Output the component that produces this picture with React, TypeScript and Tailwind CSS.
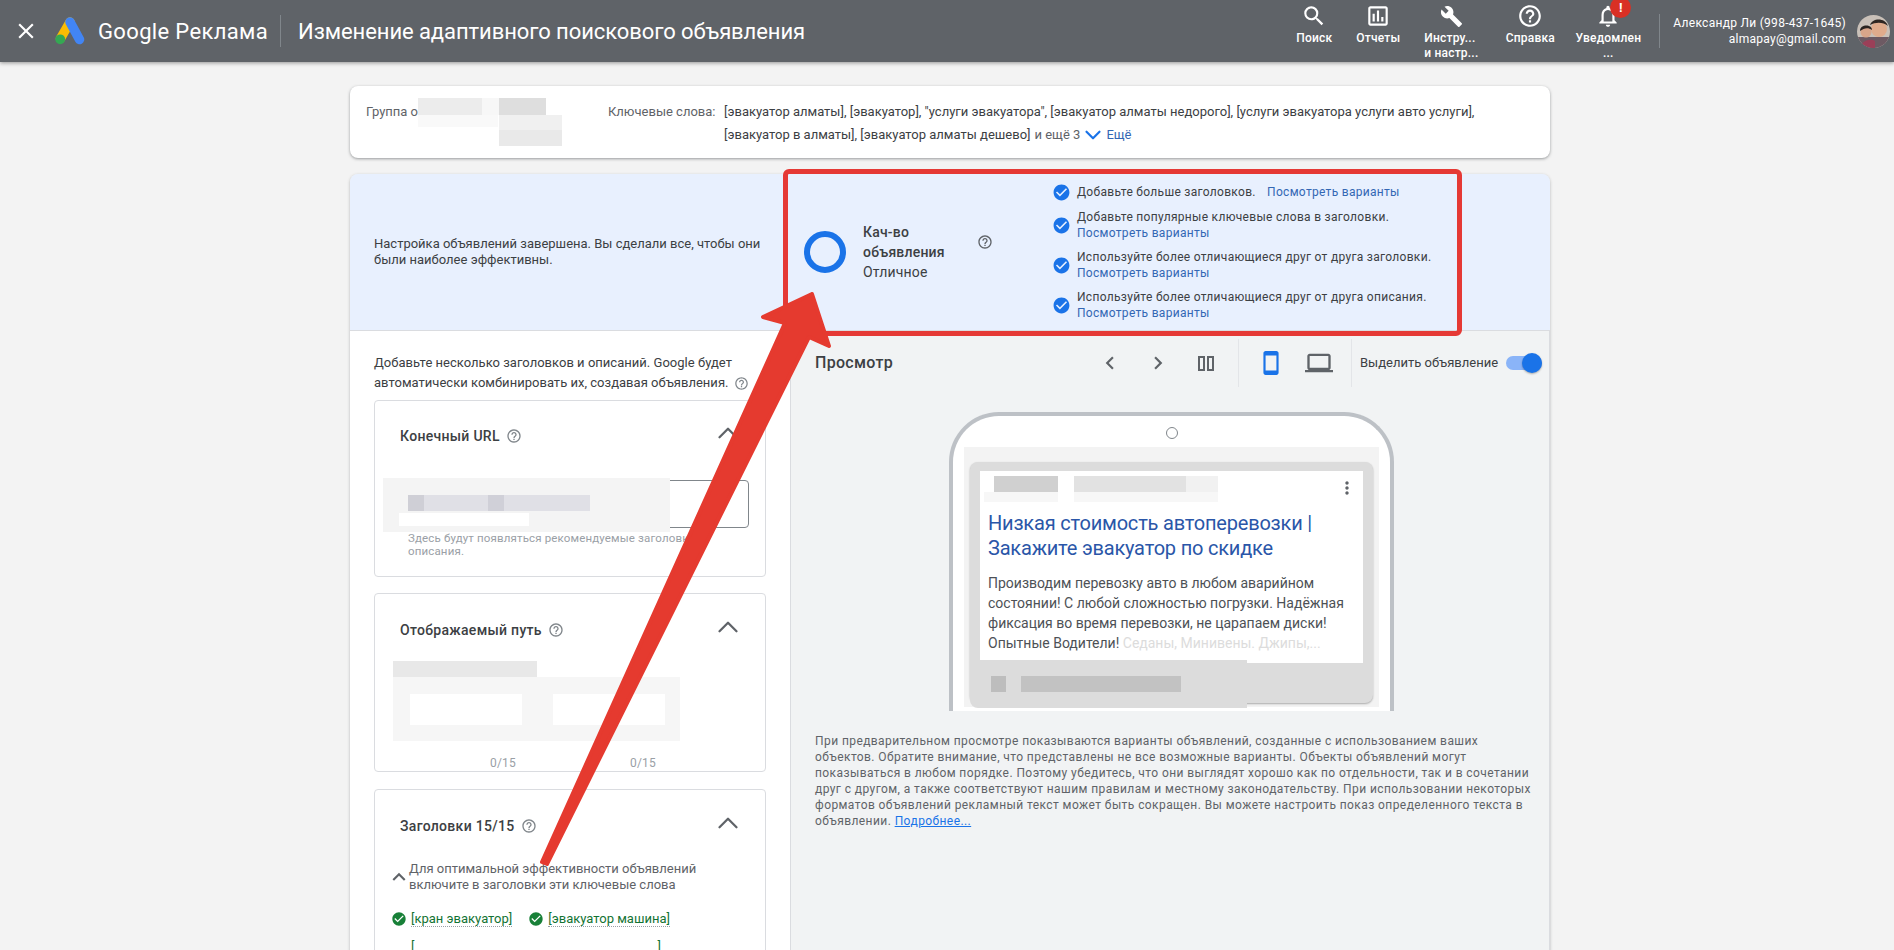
import type { ReactNode } from 'react'
import { ChevronUp, ChevronDown } from 'lucide-react'
import {
  MdClose,
  MdSearch,
  MdOutlineAssessment,
  MdBuild,
  MdHelpOutline,
  MdOutlineNotifications,
  MdCheckCircle,
  MdKeyboardArrowUp,
  MdChevronLeft,
  MdChevronRight,
  MdSmartphone,
  MdLaptop,
  MdMoreVert,
} from 'react-icons/md'

function AdsLogo() {
  return (
    <svg width="30" height="28" viewBox="0 0 30 28" className="shrink-0">
      <path d="M15 5 L5.5 21.5" stroke="#fbbc04" strokeWidth="9.5" strokeLinecap="round" />
      <path d="M15 5 L24.5 22.5" stroke="#4285f4" strokeWidth="9.5" strokeLinecap="round" />
      <circle cx="5.2" cy="22.3" r="4.9" fill="#34a853" />
    </svg>
  )
}

function Avatar() {
  return (
    <svg width="33" height="33" viewBox="0 0 33 33" className="shrink-0 rounded-full">
      <rect width="33" height="33" fill="#c9c0b8" />
      <rect y="22" width="33" height="11" fill="#6d5a63" />
      <circle cx="22" cy="14" r="8" fill="#e0ab8c" />
      <path d="M13 10 C15 3 28 2 31 11 C26 7 19 7 13 10 Z" fill="#2f2622" />
      <circle cx="9" cy="17" r="5.5" fill="#d9a58a" />
      <path d="M3 16 C3 9 15 9 15 15 C11 12 7 13 3 16 Z" fill="#2a2320" />
      <path d="M4 33 C4 25 14 23 18 26 L18 33 Z" fill="#9b3f58" />
    </svg>
  )
}

function NavItem({ icon, label, second, width }: { icon: ReactNode; label: string; second?: string; width: string }) {
  return (
    <div className={`flex h-[62px] flex-col items-center pt-[3px] ${width}`}>
      <div className="flex h-[26px] items-center justify-center text-[26px] text-white">{icon}</div>
      <div className="mt-[2px] text-[12px] leading-[15px] font-medium tracking-[0.2px] whitespace-nowrap text-white">
        <div>{label}</div>
        {second && <div className="text-center">{second}</div>}
      </div>
    </div>
  )
}

function Suggestion({ text }: { text: string }) {
  return (
    <div className="flex h-[40px] items-center">
      <MdCheckCircle className="mr-[6px] ml-[-1px] shrink-0 text-[19px] text-[#1a73e8]" />
      <div className="leading-[16px] whitespace-nowrap">
        <div>{text}</div>
        <a className="text-[#3367b4]">Посмотреть варианты</a>
      </div>
    </div>
  )
}

function CardHead({ title }: { title: string }) {
  return (
    <div className="flex h-[24px] items-center justify-between pr-[20px] pl-[25px]">
      <div className="flex items-center text-[14px] font-medium tracking-[0.3px] text-[#3c4043]">
        {title}
        <MdHelpOutline className="ml-[6px] text-[16px] text-[#80868b]" />
      </div>
      <ChevronUp size={34} strokeWidth={1.6} className="mt-[-6px] text-[#5f6368]" />
    </div>
  )
}

function Keyword({ text }: { text: string }) {
  return (
    <div className="flex items-center">
      <MdCheckCircle className="mr-[4px] text-[16px] text-[#188038]" />
      <span className="border-b border-dotted border-[#9aa0a6] leading-[15px] text-[#137333]">{text}</span>
    </div>
  )
}

export default function App() {
  return (
    <div className="relative h-[950px] w-[1894px] overflow-hidden bg-[#f3f3f3] [font-family:Roboto,sans-serif] text-[#3c4043]">
      <header className="relative z-10 flex h-[62px] items-center bg-[#5f6368] text-white shadow-[0_1px_4px_rgba(0,0,0,0.4)]">
        <MdClose className="ml-[13px] text-[26px]" />
        <div className="ml-[16px]">
          <AdsLogo />
        </div>
        <div className="ml-[13px] text-[22px] tracking-[0.35px] whitespace-nowrap">Google Реклама</div>
        <div className="ml-[12px] h-[32px] w-px bg-[#80868b]" />
        <div className="ml-[17px] text-[22px] tracking-[-0.08px] whitespace-nowrap">Изменение адаптивного поискового объявления</div>
        <div className="ml-auto flex items-start">
          <NavItem width="w-[64px]" icon={<MdSearch />} label="Поиск" />
          <NavItem width="w-[64px]" icon={<MdOutlineAssessment />} label="Отчеты" />
          <NavItem width="w-[82px]" icon={<MdBuild className="text-[23px]" />} label="Инстру..." second="и настр..." />
          <NavItem width="w-[76px]" icon={<MdHelpOutline />} label="Справка" />
          <div className="relative w-[80px]">
            <NavItem width="w-[80px]" icon={<MdOutlineNotifications />} label="Уведомлен" second="..." />
            <div className="absolute top-[-3px] left-[42px] flex h-[21px] w-[21px] items-center justify-center rounded-full bg-[#d93025] text-[13px] font-bold">!</div>
          </div>
        </div>
        <div className="ml-[11px] h-[34px] w-px bg-[#80868b]" />
        <div className="ml-[13px] text-right text-[12px] leading-[16px] tracking-[0.28px] whitespace-nowrap">
          <div>Александр Ли (998-437-1645)</div>
          <div>almapay@gmail.com</div>
        </div>
        <div className="mr-[4px] ml-[11px]">
          <Avatar />
        </div>
      </header>

      <main className="ml-[350px] w-[1200px] pt-[24px]">
        <section className="relative flex h-[72px] rounded-lg bg-white pt-[16px] text-[13px] leading-[20px] shadow-[0_1px_3px_rgba(60,64,67,0.5)]">
          <div className="ml-[16px] w-[242px] text-[#5f6368]">Группа о</div>
          <div className="w-[116px] text-[#5f6368]">Ключевые слова:</div>
          <div className="w-[770px]">
            <div className="whitespace-nowrap">[эвакуатор алматы], [эвакуатор], "услуги эвакуатора", [эвакуатор алматы недорого], [услуги эвакуатора услуги авто услуги],</div>
            <div className="flex items-center whitespace-nowrap">
              [эвакуатор в алматы], [эвакуатор алматы дешево]
              <span className="ml-[4px] text-[#5f6368]">и ещё 3</span>
              <ChevronDown size={26} strokeWidth={2} className="text-[#1a73e8]" />
              <span className="text-[#3367b4]">Ещё</span>
            </div>
          </div>
          <div className="absolute top-[12px] left-[68px] h-[17px] w-[64px] bg-[#ececec]" />
          <div className="absolute top-[12px] left-[132px] h-[17px] w-[17px] bg-[#f7f7f7]" />
          <div className="absolute top-[12px] left-[149px] h-[17px] w-[47px] bg-[#dedede]" />
          <div className="absolute top-[29px] left-[68px] h-[12px] w-[80px] bg-[#f9f9f9]" />
          <div className="absolute top-[29px] left-[149px] h-[15px] w-[63px] bg-[#f0f0f0]" />
          <div className="absolute top-[44px] left-[149px] h-[16px] w-[63px] bg-[#e9e9e9]" />
        </section>

        <section className="relative mt-[16px] rounded-t-lg shadow-[0_1px_3px_rgba(60,64,67,0.35)]">
          <div className="flex h-[157px] items-center rounded-t-lg border-b border-[#dadce0] bg-[#e8f0fe]">
            <div className="ml-[24px] w-[409px] text-[13px] leading-[16px]">
              Настройка объявлений завершена. Вы сделали все, чтобы они были наиболее эффективны.
            </div>
            <div className="ml-[21px] h-[42px] w-[42px] rounded-full border-[6px] border-[#1a73e8]" />
            <div className="ml-[17px] w-[100px] text-[14px] leading-[20px] tracking-[0.2px]">
              <div className="font-medium">Кач-во объявления</div>
              <div>Отличное</div>
            </div>
            <MdHelpOutline className="mt-[-20px] ml-[14px] text-[16px] text-[#5f6368]" />
            <div className="ml-[60px] w-[388px] text-[12px] leading-[16px] tracking-[0.3px]">
              <div className="flex h-[26px] items-center">
                <MdCheckCircle className="mr-[6px] ml-[-1px] shrink-0 text-[19px] text-[#1a73e8]" />
                <div className="whitespace-nowrap">
                  Добавьте больше заголовков. <a className="ml-[8px] text-[#3367b4]">Посмотреть варианты</a>
                </div>
              </div>
              <Suggestion text="Добавьте популярные ключевые слова в заголовки." />
              <Suggestion text="Используйте более отличающиеся друг от друга заголовки." />
              <Suggestion text="Используйте более отличающиеся друг от друга описания." />
            </div>
          </div>

          <div className="flex h-[630px]">
            <div className="w-[441px] border-r border-[#dadce0] bg-white px-[24px] pt-[22px]">
              <div className="text-[13px] leading-[20px] tracking-[0.02px]">
                Добавьте несколько заголовков и описаний. Google будет автоматически комбинировать их, создавая объявления.
                <MdHelpOutline className="ml-[5px] inline text-[15px] text-[#80868b]" />
              </div>

              <div className="relative mt-[7px] h-[177px] rounded border border-[#dadce0] pt-[23px]">
                <CardHead title="Конечный URL" />
                <div className="mt-[32px] mr-[16px] ml-[16px] h-[48px] rounded border border-[#80868b]" />
                <div className="mt-[4px] pr-[30px] pl-[33px] text-[11.5px] leading-[13px] tracking-[0.15px] text-[#9aa0a6]">
                  Здесь будут появляться рекомендуемые заголовки и описания.
                </div>
                <div className="absolute top-[77px] left-[8px] h-[54px] w-[287px] bg-[#f4f4f4]" />
                <div className="absolute top-[94px] left-[33px] h-[16px] w-[182px] bg-[#e0e0e6]" />
                <div className="absolute top-[94px] left-[33px] h-[16px] w-[16px] bg-[#cfcfd6]" />
                <div className="absolute top-[94px] left-[113px] h-[16px] w-[16px] bg-[#d0d0d8]" />
                <div className="absolute top-[112px] left-[24px] h-[13px] w-[130px] bg-white" />
              </div>

              <div className="relative mt-[16px] h-[179px] rounded border border-[#dadce0] pt-[24px]">
                <CardHead title="Отображаемый путь" />
                <div className="absolute top-[67px] left-[18px] h-[16px] w-[144px] bg-[#e8e8e8]" />
                <div className="absolute top-[83px] left-[18px] h-[64px] w-[287px] bg-[#f6f6f6]" />
                <div className="absolute top-[100px] left-[35px] h-[31px] w-[112px] bg-white" />
                <div className="absolute top-[100px] left-[178px] h-[31px] w-[112px] bg-white" />
                <div className="mt-[113px] flex text-[12px] leading-[16px] tracking-[0.2px] text-[#9aa0a6]">
                  <div className="ml-[115px] w-[140px]">0/15</div>
                  <div>0/15</div>
                </div>
              </div>

              <div className="mt-[17px] h-[300px] rounded border border-[#dadce0] pt-[24px]">
                <CardHead title="Заголовки 15/15" />
                <div className="mt-[23px] flex items-center">
                  <MdKeyboardArrowUp className="ml-[11px] shrink-0 text-[26px] text-[#5f6368]" />
                  <div className="ml-[-3px] text-[13px] leading-[16px] text-[#5f6368]">
                    Для оптимальной эффективности объявлений
                    <br />
                    включите в заголовки эти ключевые слова
                  </div>
                </div>
                <div className="mt-[18px] ml-[16px] flex gap-[16px] text-[13px]">
                  <Keyword text="[кран эвакуатор]" />
                  <Keyword text="[эвакуатор машина]" />
                </div>
                <div className="mt-[10px] ml-[36px] flex w-[250px] justify-between text-[13px] text-[#137333]">
                  <span>[</span>
                  <span>]</span>
                </div>
              </div>
            </div>

            <div className="w-[759px] border-r border-[#dadce0] bg-[#f1f3f4]">
              <div className="flex h-[64px] items-center pl-[24px]">
                <div className="w-[282px] text-[16px] font-medium tracking-[0.3px]">Просмотр</div>
                <MdChevronLeft className="text-[26px] text-[#5f6368]" />
                <MdChevronRight className="ml-[22px] text-[26px] text-[#5f6368]" />
                <svg width="16" height="15" viewBox="0 0 16 15" className="ml-[27px] fill-none stroke-[#5f6368] stroke-2">
                  <rect x="1" y="1" width="5" height="13" />
                  <rect x="10" y="1" width="5" height="13" />
                </svg>
                <div className="ml-[24px] h-[48px] w-px bg-[#e3e5e8]" />
                <MdSmartphone className="ml-[19px] text-[26px] text-[#1a73e8]" />
                <MdLaptop className="ml-[21px] text-[28px] text-[#5f6368]" />
                <div className="ml-[18px] h-[48px] w-px bg-[#e3e5e8]" />
                <div className="ml-[8px] text-[13px] whitespace-nowrap">Выделить объявление</div>
                <div className="relative ml-[8px] h-[14px] w-[36px] rounded-full bg-[#8ab4f8]">
                  <div className="absolute top-[-3px] right-0 h-[20px] w-[20px] rounded-full bg-[#1a73e8] shadow-[0_1px_2px_rgba(0,0,0,0.3)]" />
                </div>
              </div>

              <div className="mt-[17px] ml-[158px] h-[299px] w-[445px] rounded-t-[50px] border-x-4 border-t-4 border-[#bdc1c6] bg-white px-[11px] pt-[11px]">
                <div className="mx-auto h-[12px] w-[12px] rounded-full border border-[#80868b]" />
                <div className="mt-[8px] h-[260px] bg-[#f3f3f3] px-[6px] pt-[15px]">
                  <div className="relative h-[241px] rounded-lg bg-[#dcdcdc] px-[10px] pt-[9px] shadow-[0_1px_2px_rgba(0,0,0,0.3)]">
                    <div className="relative h-[192px] bg-white px-[8px] pt-[40px]">
                      <div className="absolute top-[5px] left-[14px] h-[16px] w-[64px] bg-[#d0d0d0]" />
                      <div className="absolute top-[21px] left-[4px] h-[10px] w-[74px] bg-[#f7f7f7]" />
                      <div className="absolute top-[5px] left-[94px] h-[16px] w-[112px] bg-[#e2e2e2]" />
                      <div className="absolute top-[5px] left-[206px] h-[16px] w-[32px] bg-[#f1f1f1]" />
                      <div className="absolute top-[21px] left-[94px] h-[10px] w-[144px] bg-[#f7f7f7]" />
                      <MdMoreVert className="absolute top-[7px] right-[6px] text-[20px] text-[#5f6368]" />
                      <div className="text-[20px] leading-[25px] tracking-[-0.2px] text-[#2a56a8]">
                        Низкая стоимость автоперевозки |
                        <br />
                        Закажите эвакуатор по скидке
                      </div>
                      <div className="mt-[12px] text-[14px] leading-[20px] text-[#4d5156]">
                        Производим перевозку авто в любом аварийном
                        <br />
                        состоянии! С любой сложностью погрузки. Надёжная
                        <br />
                        фиксация во время перевозки, не царапаем диски!
                        <br />
                        Опытные Водители! <span className="text-[#dcdcdc]">Седаны, Минивены. Джипы,...</span>
                      </div>
                    </div>
                    <div className="absolute top-[198px] left-0 h-[48px] w-[277px] rounded-bl-lg bg-[#dcdcdc]" />
                    <div className="absolute top-[214px] left-[21px] h-[16px] w-[15px] bg-[#bdbdbd]" />
                    <div className="absolute top-[214px] left-[51px] h-[16px] w-[160px] bg-[#c2c2c2]" />
                  </div>
                </div>
              </div>

              <div className="mt-[22px] ml-[24px] w-[716px] text-[12px] leading-[16px] tracking-[0.42px] text-[#5f6368]">
                При предварительном просмотре показываются варианты объявлений, созданные с использованием ваших объектов. Обратите внимание, что представлены не все возможные варианты. Объекты объявлений могут показываться в любом порядке. Поэтому убедитесь, что они выглядят хорошо как по отдельности, так и в сочетании друг с другом, а также соответствуют нашим правилам и местному законодательству. При использовании некоторых форматов объявлений рекламный текст может быть сокращен. Вы можете настроить показ определенного текста в объявлении.{' '}
                <a className="text-[#1a73e8] underline">Подробнее...</a>
              </div>
            </div>
          </div>

          <div className="absolute top-[-5px] left-[433px] h-[167px] w-[679px] rounded-md border-[5px] border-[#e53935]" />
        </section>
      </main>

      <svg className="pointer-events-none absolute top-0 left-0 z-20" width="1894" height="950">
        <polygon
          points="812,294 763,317 785,323 542,862 547,864 809,337 829,346"
          fill="#e53a2f"
          stroke="#e53a2f"
          strokeWidth="4"
          strokeLinejoin="round"
        />
      </svg>
    </div>
  )
}
